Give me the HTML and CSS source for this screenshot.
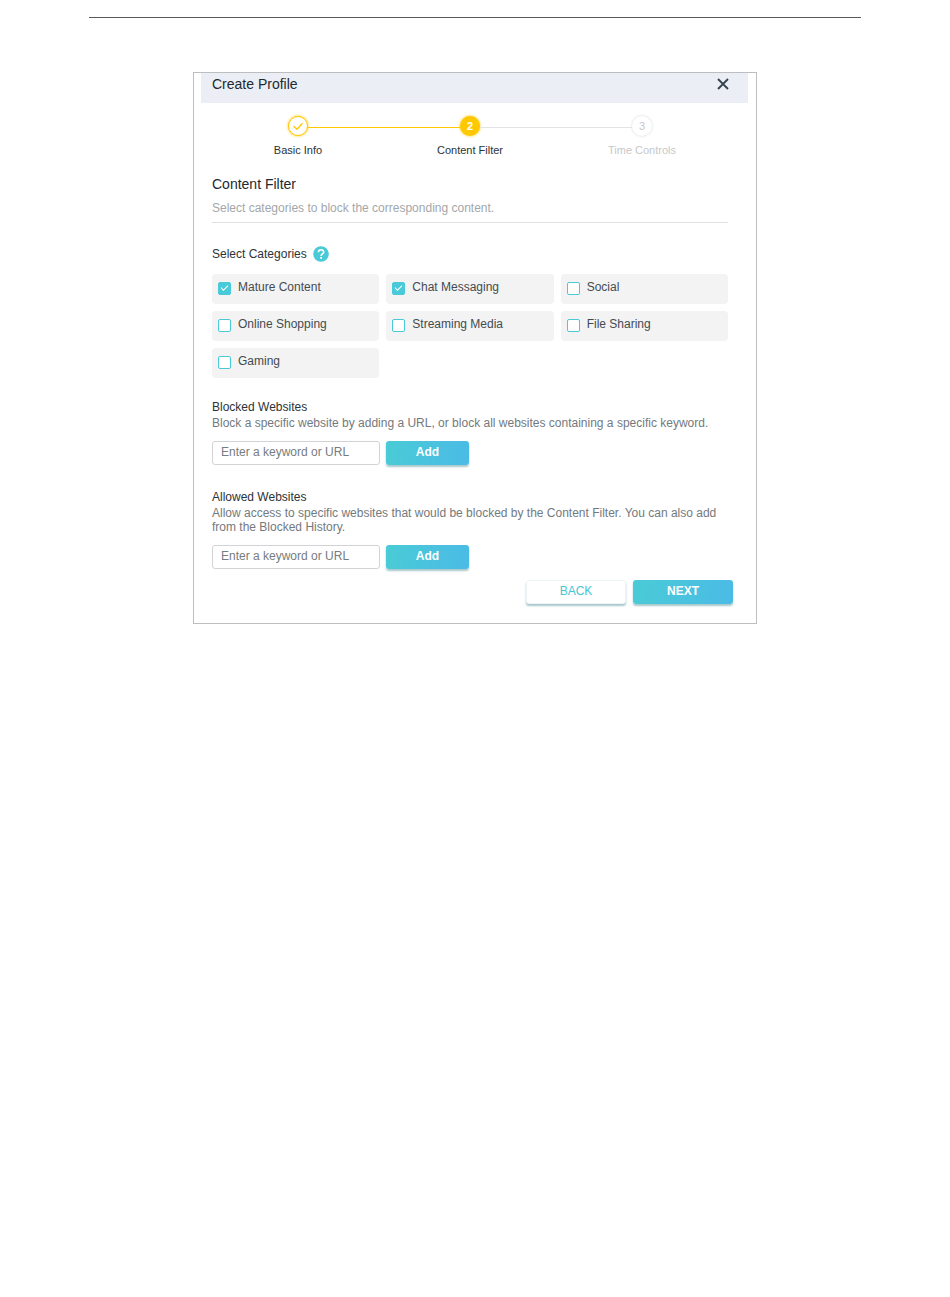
FILE: index.html
```html
<!DOCTYPE html>
<html lang="en">
<head>
<meta charset="utf-8">
<title>Create Profile</title>
<meta name="viewport" content="width=device-width, initial-scale=1">
<link rel="stylesheet" href="styles.css">
</head>
<body>
<main class="page">
  <hr class="page-rule">
  <section class="dialog" aria-labelledby="dialog-title">
    <header class="dialog-header">
      <h1 class="title" id="dialog-title">Create Profile</h1>
      <button class="close" type="button" aria-label="Close">
        <svg viewBox="0 0 12 12" width="12" height="12"><path d="M1 1L11 11M11 1L1 11" fill="none" stroke="#37444d" stroke-width="1.9"/></svg>
      </button>
    </header>
    <form class="dialog-body">
      <ol class="steps">
        <li class="step done">
          <span class="dot"><svg viewBox="0 0 12 12" width="12" height="12"><path d="M1.5 6L5 9.3L10.5 3.2" fill="none" stroke="#ffc800" stroke-width="1.3"/></svg></span>
          <span class="step-label">Basic Info</span>
        </li>
        <li class="step current"><span class="dot">2</span><span class="step-label">Content Filter</span></li>
        <li class="step pending"><span class="dot">3</span><span class="step-label">Time Controls</span></li>
      </ol>

      <h2 class="title">Content Filter</h2>
      <p class="intro">Select categories to block the corresponding content.</p>

      <fieldset class="categories">
        <legend class="legend">Select Categories
          <button class="help" type="button" aria-label="Help">
            <svg viewBox="0 0 16 16" width="16" height="16"><circle cx="8" cy="8" r="7.8" fill="#48cad8"/><path d="M5.4 6.3C5.4 3 10.7 3 10.7 6.1C10.7 7.9 8.1 7.9 8.1 9.9" fill="none" stroke="#fff" stroke-width="1.6"/><rect x="7.2" y="11" width="1.8" height="1.8" fill="#fff"/></svg>
          </button>
        </legend>
        <div class="category-grid">
          <label class="category"><input type="checkbox" checked>Mature Content</label>
          <label class="category"><input type="checkbox" checked>Chat Messaging</label>
          <label class="category"><input type="checkbox">Social</label>
          <label class="category"><input type="checkbox">Online Shopping</label>
          <label class="category"><input type="checkbox">Streaming Media</label>
          <label class="category"><input type="checkbox">File Sharing</label>
          <label class="category"><input type="checkbox">Gaming</label>
        </div>
      </fieldset>

      <section class="sites">
        <label class="sites-title" for="blocked">Blocked Websites</label>
        <p class="hint">Block a specific website by adding a URL, or block all websites containing a specific keyword.</p>
        <div class="add-row">
          <input class="url" id="blocked" type="text" placeholder="Enter a keyword or URL">
          <button class="btn primary" type="button">Add</button>
        </div>
      </section>

      <section class="sites">
        <label class="sites-title" for="allowed">Allowed Websites</label>
        <p class="hint">Allow access to specific websites that would be blocked by the Content Filter. You can also add from the Blocked History.</p>
        <div class="add-row">
          <input class="url" id="allowed" type="text" placeholder="Enter a keyword or URL">
          <button class="btn primary" type="button">Add</button>
        </div>
      </section>
    </form>
    <footer class="actions">
      <button class="btn secondary" type="button">BACK</button>
      <button class="btn primary" type="button">NEXT</button>
    </footer>
  </section>
</main>
</body>
</html>
```
FILE: styles.css
```css
* { box-sizing: border-box; }

body {
  margin: 0;
  background: #fff;
  color: #2b3338;
  font: 12px/14px "Liberation Sans", Arial, sans-serif;
}

h1, h2, p, ol { margin: 0; padding: 0; }

button, input { font: inherit; }

.page { padding: 17px 89px; }

.page-rule {
  margin: 0 0 54px;
  border: 0;
  border-top: 1px solid #58595b;
}

.dialog {
  max-width: 564px;
  margin: 0 auto;
  padding: 0 8px 19px 7px;
  border: 1px solid #bcbec0;
}

.dialog-header {
  display: flex;
  align-items: center;
  justify-content: space-between;
  padding: 2px 19px 10px 11px;
  background: #ebeff5;
}

.title {
  color: #22292e;
  font-size: 14px;
  font-weight: 400;
  line-height: 18px;
}

.close, .help {
  display: flex;
  padding: 0;
  border: 0;
  background: none;
}

.dialog-body { padding: 13px 20px 0 11px; }

.steps {
  display: grid;
  grid-template-columns: repeat(3, 1fr);
  list-style: none;
}

.step {
  position: relative;
  display: flex;
  flex-direction: column;
  align-items: center;
  gap: 7px;
  font-size: 11px;
}

/* Connector between this step and the previous one. */
.step + .step::before {
  content: "";
  position: absolute;
  top: 11px;
  right: calc(50% + 10px);
  width: calc(100% - 20px);
  height: 1px;
  background: #e2e3e4;
}

.step.current::before { background: #ffc800; }

.dot {
  display: flex;
  align-items: center;
  justify-content: center;
  width: 20px;
  height: 20px;
  border-radius: 50%;
  background: #fff;
}

.done .dot {
  border: 1px solid #ffc800;
  box-shadow: 0 0 3px #ffc800;
}

.current .dot {
  background: #ffc800;
  box-shadow: 0 0 3px #ffc800;
  color: #fff;
  font-weight: 700;
}

.pending { color: #c6c8ca; }

.pending .dot { box-shadow: 0 0 3px #d4d6d8; }

.dialog-body > .title { margin-top: 18px; }

.intro {
  padding: 8px 0 7px;
  border-bottom: 1px solid #dfe0e1;
  color: #a3a7aa;
}

.categories {
  margin: 0;
  padding: 0;
  border: 0;
}

.legend {
  display: flex;
  align-items: center;
  gap: 6px;
  padding: 23px 0 12px;
}

.category-grid {
  display: grid;
  grid-template-columns: repeat(3, 1fr);
  gap: 7px;
}

.category {
  display: flex;
  align-items: center;
  gap: 7px;
  height: 30px;
  padding: 0 6px 4px;
  border-radius: 4px;
  background: #f3f3f3;
  color: #444b50;
}

.category input {
  appearance: none;
  width: 13px;
  height: 13px;
  margin: 2px 0 0;
  border: 1px solid #48cad8;
  border-radius: 2px;
  background: #fff;
}

.category input:checked {
  display: grid;
  place-items: center;
  background: #48cad8;
}

.category input:checked::before {
  content: "";
  width: 6px;
  height: 3px;
  margin-bottom: 2px;
  border: solid #fff;
  border-width: 0 0 1px 1px;
  transform: rotate(-45deg);
}

.sites { margin-top: 21px; }

.sites + .sites { margin-top: 24px; }

.sites-title {
  display: block;
  margin-bottom: 1px;
  line-height: 16px;
}

.hint { color: #737a7e; }

.add-row {
  display: flex;
  gap: 6px;
  margin-top: 11px;
}

.url {
  width: 168px;
  height: 24px;
  padding: 0 8px 2px;
  border: 1px solid #d1d3d4;
  border-radius: 3px;
  background: #fff;
  color: #2b3338;
}

.url::placeholder { color: #777c80; opacity: 1; }

.btn {
  width: 100px;
  height: 24px;
  padding: 0 0 2px;
  border: 0;
  border-radius: 3px;
  box-shadow: 0 2px 2px #a9c8cc;
}

.add-row .btn { width: 83px; }

.primary {
  background: linear-gradient(100deg, #4acbd6, #4bbbe6);
  color: #fff;
  font-weight: 700;
}

.secondary {
  border: 1px solid #edf5f6;
  background: #fff;
  color: #48c5d2;
}

.actions {
  display: flex;
  justify-content: flex-end;
  gap: 7px;
  padding: 11px 15px 0 0;
}
```
